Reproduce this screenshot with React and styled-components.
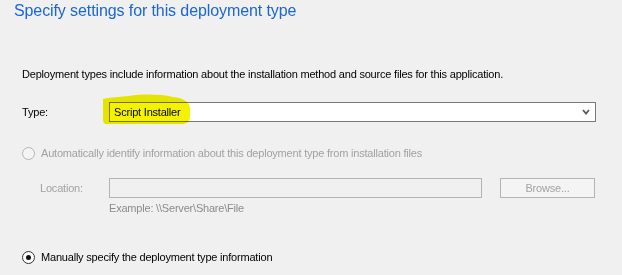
import * as React from "react";
import styled, { createGlobalStyle } from "styled-components";

// Global reset

const GlobalStyle = createGlobalStyle`
  html, body {
    margin: 0;
    padding: 0;
    background: #f0f0f0;
  }
  body {
    font-family: "Liberation Sans", Arial, sans-serif;
  }
`;

const Page = styled.div`
  width: 622px;
  height: 275px;
  background: #f0f0f0;
  overflow: hidden;
  box-sizing: border-box;
`;

const Title = styled.h1`
  margin: 0;
  padding: 0 0 0 14px;
  font-weight: normal;
  font-size: 16px;
  line-height: 21px;
  letter-spacing: -0.1px;
  color: #1a66d4;
`;

const Body = styled.div`
  padding-left: 22px;
  display: flex;
  flex-direction: column;
`;

const Text = styled.div`
  font-size: 11px;
  line-height: 16px;
  letter-spacing: -0.2px;
  color: ${props => (props.disabled ? "#a2a2a2" : "#000")};
  white-space: nowrap;
`;

const Description = styled(Text)`
  margin-top: 45px;
`;

const Row = styled.div`
  position: relative;
  display: flex;
  align-items: center;
  margin-top: ${props => props.top}px;
  margin-left: ${props => props.indent || 0}px;
`;

const Label = styled(Text)`
  width: ${props => props.width}px;
  flex: none;
`;

const Select = styled.div`
  width: 487px;
  height: 20px;
  box-sizing: border-box;
  border: 1px solid #7a7a7a;
  background: #fff;
  display: flex;
  align-items: center;
  justify-content: space-between;
  padding: 0 5px 0 4px;
`;

const Highlight = styled.svg`
  position: absolute;
  left: 81px;
  top: -8px;
  width: 88px;
  height: 31px;
  mix-blend-mode: multiply;
  pointer-events: none;
`;

const Radio = styled.span`
  width: 13px;
  height: 13px;
  box-sizing: border-box;
  border-radius: 50%;
  border: 1px solid ${props => (props.disabled ? "#b4b4b4" : "#333")};
  background: ${props => (props.disabled ? "#f4f4f4" : "#fff")};
  display: flex;
  align-items: center;
  justify-content: center;
  margin-right: 6px;
  flex: none;

  &::after {
    content: "";
    display: ${props => (props.checked ? "block" : "none")};
    width: 5px;
    height: 5px;
    border-radius: 50%;
    background: #111;
  }
`;

const Input = styled.div`
  width: 373px;
  height: 20px;
  box-sizing: border-box;
  border: 1px solid #b1b5b7;
  background: #f0f0f0;
`;

const Button = styled.div`
  width: 95px;
  height: 20px;
  box-sizing: border-box;
  margin-left: 18px;
  border: 1px solid #b1b5b7;
  background: #f4f4f4;
  color: #a2a2a2;
  font-size: 11px;
  letter-spacing: -0.2px;
  display: flex;
  align-items: center;
  justify-content: center;
`;

const Hint = styled(Text)`
  margin: 3px 0 0 87px;
  line-height: 14px;
  color: #8c8c8c;
`;

function App() {
  return (
    <Page>
      <GlobalStyle />
      <Title>Specify settings for this deployment type</Title>
      <Body>
        <Description>
          Deployment types include information about the installation method and source files for this application.
        </Description>

        <Row top={20}>
          <Label width={87}>Type:</Label>
          <Select>
            <Text>Script Installer</Text>
            <svg width="8" height="6" viewBox="0 0 8 6">
              <path d="M1 1 L4 4.5 L7 1" fill="none" stroke="#5a5a5a" strokeWidth="1.8" />
            </svg>
          </Select>
          <Highlight viewBox="0 0 88 31">
            <path
              d="M0 5 C8 3 18 3 26 2 C40 0 56 0 70 3 C80 4 87 8 87 14 L87 22 C87 28 84 30 78 30 L4 30 C1 30 0 28 0 25 Z"
              fill="#f4f200"
            />
          </Highlight>
        </Row>

        <Row top={23}>
          <Radio disabled />
          <Text disabled>Automatically identify information about this deployment type from installation files</Text>
        </Row>

        <Row top={17} indent={18}>
          <Label width={69} disabled>Location:</Label>
          <Input />
          <Button>Browse...</Button>
        </Row>
        <Hint>Example: \\Server\Share\File</Hint>

        <Row top={34}>
          <Radio checked />
          <Text>Manually specify the deployment type information</Text>
        </Row>
      </Body>
    </Page>
  );
}

export default App;
